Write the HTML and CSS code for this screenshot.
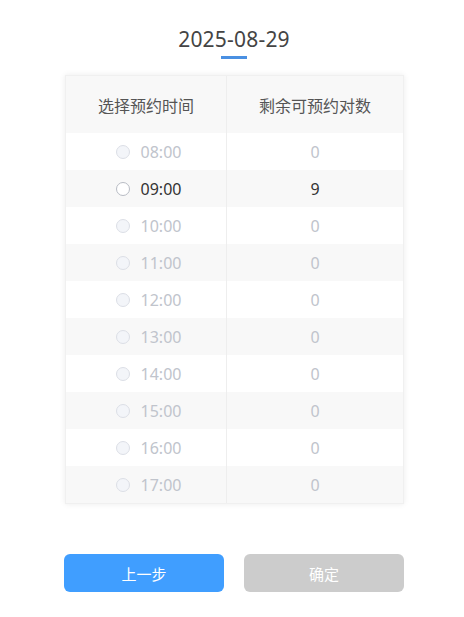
FILE: index.html
```html
<!DOCTYPE html>
<html lang="zh">
<head>
<meta charset="utf-8">
<link rel="stylesheet" href="styles.css">
</head>
<body>
<div class="page">
  <div class="title">2025-08-29</div>
  <div class="title-bar"></div>
  <div class="table">
    <div class="row head">
      <div class="cell c1">选择预约时间</div>
      <div class="cell c2">剩余可预约对数</div>
    </div>
    <div class="row disabled"><div class="cell c1"><span class="radio"></span><span class="time">08:00</span></div><div class="cell c2">0</div></div>
    <div class="row stripe"><div class="cell c1"><span class="radio active"></span><span class="time">09:00</span></div><div class="cell c2">9</div></div>
    <div class="row disabled"><div class="cell c1"><span class="radio"></span><span class="time">10:00</span></div><div class="cell c2">0</div></div>
    <div class="row disabled stripe"><div class="cell c1"><span class="radio"></span><span class="time">11:00</span></div><div class="cell c2">0</div></div>
    <div class="row disabled"><div class="cell c1"><span class="radio"></span><span class="time">12:00</span></div><div class="cell c2">0</div></div>
    <div class="row disabled stripe"><div class="cell c1"><span class="radio"></span><span class="time">13:00</span></div><div class="cell c2">0</div></div>
    <div class="row disabled"><div class="cell c1"><span class="radio"></span><span class="time">14:00</span></div><div class="cell c2">0</div></div>
    <div class="row disabled stripe"><div class="cell c1"><span class="radio"></span><span class="time">15:00</span></div><div class="cell c2">0</div></div>
    <div class="row disabled"><div class="cell c1"><span class="radio"></span><span class="time">16:00</span></div><div class="cell c2">0</div></div>
    <div class="row disabled stripe"><div class="cell c1"><span class="radio"></span><span class="time">17:00</span></div><div class="cell c2">0</div></div>
  </div>
  <div class="buttons">
    <button class="btn primary">上一步</button>
    <button class="btn muted">确定</button>
  </div>
</div>
</body>
</html>
```
FILE: styles.css
```css
html, body {
  margin: 0;
  padding: 0;
  background: #fff;
}
body {
  font-family: "Noto Sans", "Noto Sans CJK SC", sans-serif;
  color: #333;
}
.page {
  width: 340px;
  margin-left: 64px;
  padding-top: 25px;
  display: flex;
  flex-direction: column;
  align-items: center;
}
.title {
  font-size: 21px;
  line-height: 28px;
  color: #444;
  letter-spacing: 0.2px;
}
.title-bar {
  width: 26px;
  height: 3px;
  background: #4a90e2;
  margin-top: 3px;
}
.table {
  width: 339px;
  margin-top: 16px;
  margin-left: 1px;
  background: #fff;
  box-shadow: 0 0 6px rgba(0, 0, 0, 0.08);
  border: 1px solid #f0f0f0;
  box-sizing: border-box;
}
.row {
  display: flex;
  height: 37px;
  align-items: stretch;
}
.row.head {
  height: 57px;
  background: #f8f8f8;
  color: #555;
}
.row.stripe {
  background: #f8f8f8;
}
.cell {
  display: flex;
  align-items: center;
  justify-content: center;
  font-size: 16px;
}
.c1 {
  width: 161px;
  border-right: 1px solid #eeeeee;
  gap: 11px;
  padding-left: 5px;
  box-sizing: border-box;
}
.row.head .c1 {
  padding-left: 0;
}
.c2 {
  flex: 1;
}
.radio {
  width: 12px;
  height: 12px;
  border-radius: 50%;
  border: 1px solid #dcdfe6;
  background: #f3f5f9;
  box-sizing: content-box;
}
.radio.active {
  background: #fff;
  border-color: #b8bcc4;
}
.row.disabled .cell {
  color: #c0c4cc;
}
.time {
  line-height: 1;
}
.buttons {
  display: flex;
  gap: 20px;
  margin-top: 50px;
  width: 340px;
}
.btn {
  flex: 1;
  height: 38px;
  border: none;
  border-radius: 6px;
  color: #fff;
  font-family: "Noto Sans CJK SC", sans-serif;
  font-size: 15px;
  padding: 0;
}
.btn.primary {
  background: #409eff;
}
.btn.muted {
  background: #cccccc;
}
```
